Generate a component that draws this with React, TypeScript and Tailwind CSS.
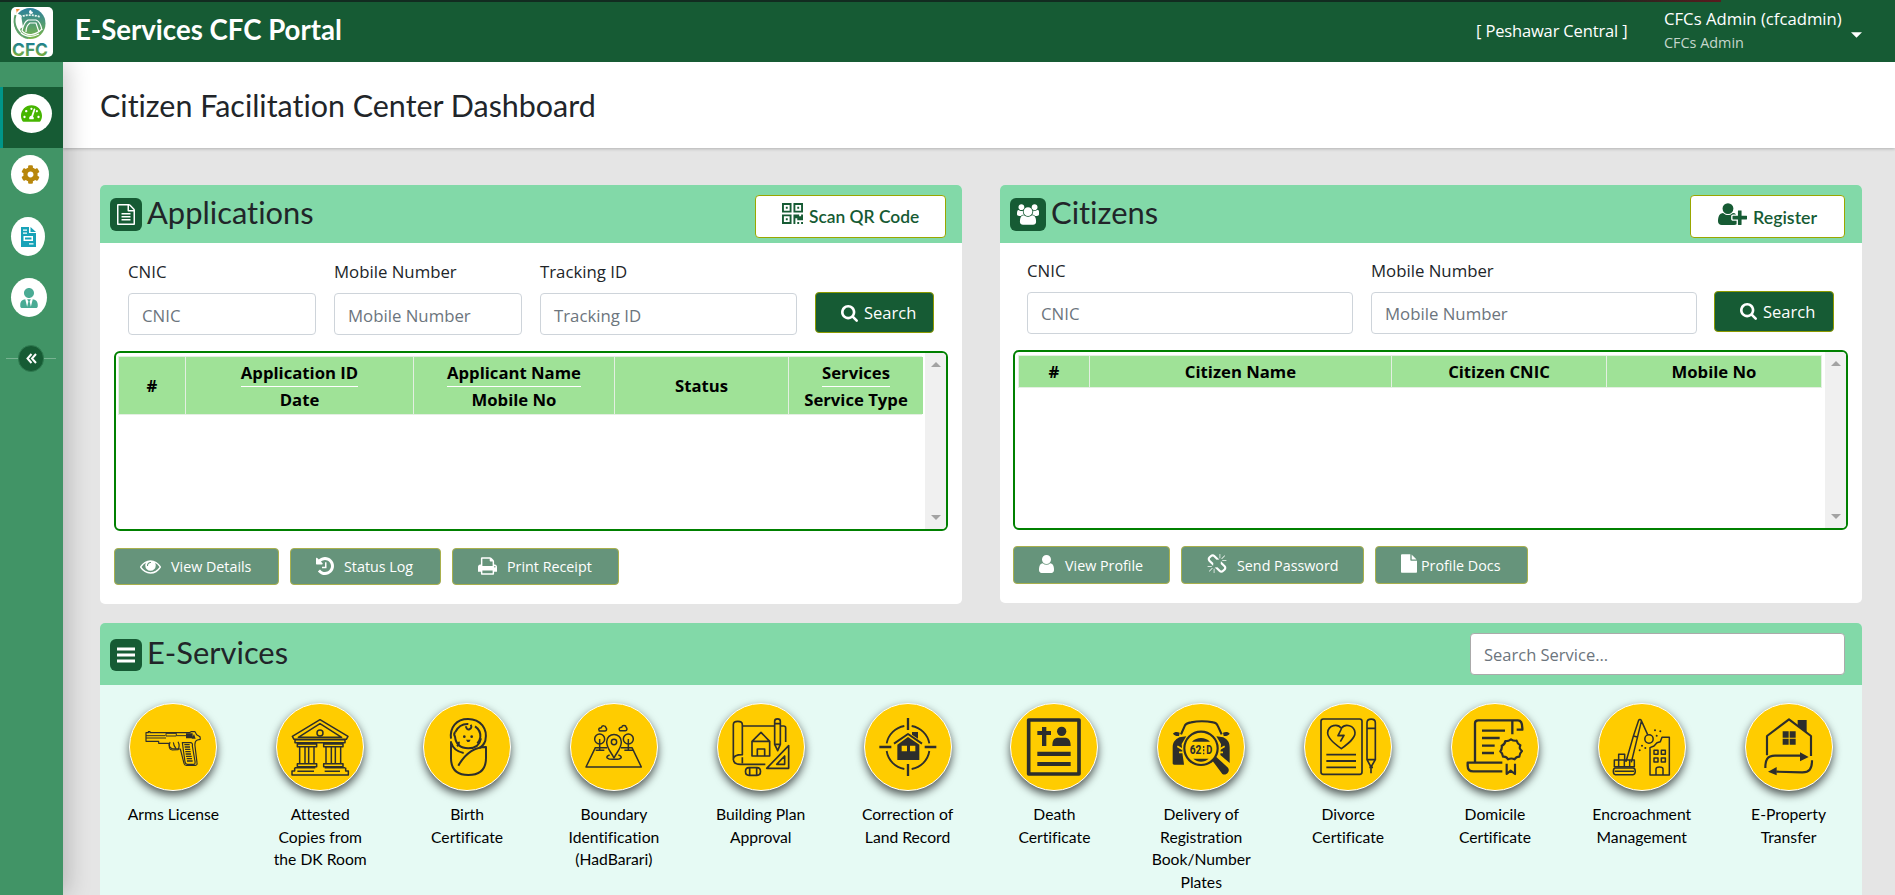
import type { ReactNode } from "react";
import { FaTachometerAlt, FaCog, FaUserTie } from "react-icons/fa";

/* ---------- glyphs ---------- */

const PATHS = {
  search:
    "M1216 832q0-185-131.5-316.5t-316.5-131.5-316.5 131.5-131.5 316.5 131.5 316.5 316.5 131.5 316.5-131.5 131.5-316.5zm512 832q0 52-38 90t-90 38q-54 0-90-38l-343-342q-179 124-399 124-143 0-273.5-55.5t-225-150-150-225-55.5-273.5 55.5-273.5 150-225 225-150 273.5-55.5 273.5 55.5 225 150 150 225 55.5 273.5q0 220-124 399l343 343q37 37 37 90z",
  eye: "M1664 960q-152-236-381-353 61 104 61 225 0 185-131.5 316.5t-316.5 131.5-316.5-131.5-131.5-316.5q0-121 61-225-229 117-381 353 133 205 333.5 326.5t434.5 121.5 434.5-121.5 333.5-326.5zm-720-384q0-20-14-34t-34-14q-125 0-214.5 89.5t-89.5 214.5q0 20 14 34t34 14 34-14 14-34q0-86 61-147t147-61q20 0 34-14t14-34zm848 384q0 34-20 69-140 230-376.5 368.5t-499.5 138.5-499.5-139-376.5-368q-20-35-20-69t20-69q140-229 376.5-368t499.5-139 499.5 139 376.5 368q20 35 20 69z",
  history:
    "M1664 896q0 156-61 298t-164 245-245 164-298 61q-172 0-327-72.5t-264-204.5q-7-10-6.5-22.5t8.5-20.5l137-138q10-9 25-9 16 2 23 12 73 95 179 147t225 52q104 0 198.5-40.5t163.5-109.5 109.5-163.5 40.5-198.5-40.5-198.5-109.5-163.5-163.5-109.5-198.5-40.5q-98 0-188 35.5t-160 101.5l137 138q31 30 14 69-17 40-59 40h-448q-26 0-45-19t-19-45v-448q0-42 40-59 39-17 69 14l130 129q107-101 244.5-156.5t284.5-55.5q156 0 298 61t245 164 164 245 61 298zm-640-288v448q0 14-9 23t-23 9h-320q-14 0-23-9t-9-23v-64q0-14 9-23t23-9h224v-352q0-14 9-23t23-9h64q14 0 23 9t9 23z",
  print:
    "M448 1536h896v-256h-896v256zm0-640h896v-384h-160q-40 0-68-28t-28-68v-160h-640v640zm1152 64q0-26-19-45t-45-19-45 19-19 45 19 45 45 19 45-19 19-45zm128 0v416q0 13-9.5 22.5t-22.5 9.5h-224v160q0 40-28 68t-68 28h-960q-40 0-68-28t-28-68v-160h-224q-13 0-22.5-9.5t-9.5-22.5v-416q0-79 56.5-135.5t135.5-56.5h64v-544q0-40 28-68t68-28h672q40 0 88 20t76 48l152 152q28 28 48 76t20 88v256h64q79 0 135.5 56.5t56.5 135.5z",
  user: "M1536 1399q0 109-62.5 187t-150.5 78h-854q-88 0-150.5-78t-62.5-187q0-85 8.5-160.5t31.5-152 58.5-131 94-89 134.5-34.5q131 128 313 128t313-128q76 0 134.5 34.5t94 89 58.5 131 31.5 152 8.5 160.5zm-256-887q0 159-112.5 271.5t-271.5 112.5-271.5-112.5-112.5-271.5 112.5-271.5 271.5-112.5 271.5 112.5 112.5 271.5z",
  unlink:
    "M503 1271l-256 256q-10 9-23 9-12 0-23-9-9-10-9-23t9-23l256-256q10-9 23-9t23 9q9 10 9 23t-9 23zm169 41v320q0 14-9 23t-23 9-23-9-9-23v-320q0-14 9-23t23-9 23 9 9 23zm-224-224q0 14-9 23t-23 9h-320q-14 0-23-9t-9-23 9-23 23-9h320q14 0 23 9t9 23zm1264 128q0 120-85 203l-147 146q-83 83-203 83-121 0-204-85l-334-335q-21-21-42-56l239-18 273 274q28 28 68 27.5t68-27.5l147-146q28-28 28-67 0-40-28-68l-274-275 18-239q35 21 56 42l336 336q84 86 84 204zm-617-724l-239 18-273-274q-28-28-68-28-39 0-68 27l-147 146q-28 28-28 67 0 40 28 68l274 274-18 240q-35-21-56-42l-336-336q-84-86-84-204 0-120 85-203l147-146q83-83 203-83 121 0 204 85l334 335q21 21 42 56zm633 84q0 14-9 23t-23 9h-320q-14 0-23-9t-9-23 9-23 23-9h320q14 0 23 9t9 23zm-544-544v320q0 14-9 23t-23 9-23-9-9-23v-320q0-14 9-23t23-9 23 9 9 23zm407 151l-256 256q-11 9-23 9t-23-9q-9-10-9-23t9-23l256-256q10-9 23-9t23 9q9 10 9 23t-9 23z",
  file: "M1152 512v-472q22 14 36 28l408 408q14 14 28 36h-472zm-128 32q0 40 28 68t68 28h544v1056q0 40-28 68t-68 28h-1344q-40 0-68-28t-28-68v-1600q0-40 28-68t68-28h800v544z",
  fileText:
    "M1596 380q28 28 48 76t20 88v1152q0 40-28 68t-68 28h-1344q-40 0-68-28t-28-68v-1600q0-40 28-68t68-28h896q40 0 88 20t76 48zm-444-244v376h376q-10-29-22-41l-313-313q-12-12-41-22zm384 1528v-1024h-416q-40 0-68-28t-28-68v-416h-768v1536h1280zm-1024-864q0-14 9-23t23-9h704q14 0 23 9t9 23v64q0 14-9 23t-23 9h-704q-14 0-23-9t-9-23v-64zm736 224q14 0 23 9t9 23v64q0 14-9 23t-23 9h-704q-14 0-23-9t-9-23v-64q0-14 9-23t23-9h704zm0 256q14 0 23 9t9 23v64q0 14-9 23t-23 9h-704q-14 0-23-9t-9-23v-64q0-14 9-23t23-9h704z",
  users:
    "M593 896q-162 5-265 128h-134q-82 0-138-40.5t-56-118.5q0-353 124-353 6 0 43.5 21t97.5 42.5 119 21.5q67 0 133-23-5 37-5 66 0 159 93 293zm1071 637q0 120-73 189.5t-194 69.5h-874q-121 0-194-69.5t-73-189.5q0-53 3.5-103.5t14-109 26.5-108.5 43-97.5 62-81 85.5-53.5 111.5-20q10 0 43 21.5t73 48 107 48 135 21.5 135-21.5 107-48 73-48 43-21.5q61 0 111.5 20t85.5 53.5 62 81 43 97.5 26.5 108.5 14 109 3.5 103.5zm-1024-1277q0 106-75 181t-181 75-181-75-75-181 75-181 181-75 181 75 75 181zm704 384q0 159-112.5 271.5t-271.5 112.5-271.5-112.5-112.5-271.5 112.5-271.5 271.5-112.5 271.5 112.5 112.5 271.5zm576 225q0 78-56 118.5t-138 40.5h-134q-103-123-265-128 93-134 93-293 0-29-5-66 66 23 133 23 59 0 119-21.5t97.5-42.5 43.5-21q124 0 124 353zm-128-609q0 106-75 181t-181 75-181-75-75-181 75-181 181-75 181 75 75 181z",
  userPlus:
    "M704 896q-159 0-271.5-112.5t-112.5-271.5 112.5-271.5 271.5-112.5 271.5 112.5 112.5 271.5-112.5 271.5-271.5 112.5zm960 128h352q13 0 22.5 9.5t9.5 22.5v192q0 13-9.5 22.5t-22.5 9.5h-352v352q0 13-9.5 22.5t-22.5 9.5h-192q-13 0-22.5-9.5t-9.5-22.5v-352h-352q-13 0-22.5-9.5t-9.5-22.5v-192q0-13 9.5-22.5t22.5-9.5h352v-352q0-13 9.5-22.5t22.5-9.5h192q13 0 22.5 9.5t9.5 22.5v352zm-736 224q0 52 38 90t90 38h256v238q-68 50-171 50h-874q-121 0-194-69t-73-190q0-53 3.5-103.5t14-109 26.5-108.5 43-97.5 62-81 85.5-53.5 111.5-20q19 0 39 17 79 61 154.500 91.500t164.500 30.500 164.500-30.500 154.500-91.500q20-17 39-17 132 0 217 96h-223q-52 0-90 38t-38 90v192z",
};

function Glyph({ name, box = "0 0 1792 1792", className }: { name: keyof typeof PATHS; box?: string; className?: string }) {
  return (
    <svg viewBox={box} className={"shrink-0 " + (className ?? "")} fill="currentColor">
      <path d={PATHS[name]} />
    </svg>
  );
}

function QrGlyph() {
  return (
    <svg viewBox="0 0 22 22" className="h-[21px] w-[21px] shrink-0" fill="currentColor">
      <path fillRule="evenodd" d="M0 0h10v10H0zM2 2v6h6V2zM12 0h10v10H12zM14 2v6h6V2zM0 12h10v10H0zM2 14v6h6v-6z" />
      <path d="M4 4h2v2H4zM16 4h2v2h-2zM4 16h2v2H4zM12 12h6v2h2v-2h2v6h-6v-2h-2v6h-2zM16 20h2v2h-2zM20 20h2v2h-2z" />
    </svg>
  );
}

function Logo() {
  return (
    <svg viewBox="0 0 42 50" className="h-[50px] w-[42px] shrink-0 overflow-visible">
      <defs>
        <linearGradient id="brand" x1="0" y1="0" x2="0" y2="1">
          <stop offset="0" stopColor="#2a7f9e" />
          <stop offset="1" stopColor="#7ab648" />
        </linearGradient>
        <linearGradient id="brandText" x1="0" y1="0" x2="0" y2="1">
          <stop offset="0.2" stopColor="#1b7f8f" />
          <stop offset="0.9" stopColor="#86b531" />
        </linearGradient>
      </defs>
      <rect width="42" height="50" rx="5" fill="#fff" />
      <circle cx="19" cy="16.500" r="15.500" fill="url(#brand)" />
      <path d="M4.500 6C1 16 5 29 17 32c-4-3-7-6-8-10l3-2L10 8z" fill="#fff" />
      <path d="M4.500 8C1.500 17 6 28 17 31" fill="none" stroke="#5da06b" strokeWidth="2" />
      <path d="M9 10c5-2.500 14-2.500 20 0" fill="none" stroke="#e8f4ef" strokeWidth="1.800" strokeDasharray="2 1" />
      <path d="M11 24c1-5 2-9 6-11h8c3 1 5 5 6 10M15 25c0-4 1-7 4-9h6l3 9" fill="none" stroke="#fff" strokeWidth="1.200" />
      <path d="M11 24c5 5 13 5 20-2M10 26c5 4 12 4 18 1" fill="none" stroke="#fff" strokeWidth="1.200" />
      <path d="M20 3a2 2 0 1 0 2 2 2 2 0 0 1-2-2" fill="#fff" />
      <path d="M5 2h4l-3 3v2z" fill="#f28c38" />
      <text x="1" y="49" fontFamily="Inter, Liberation Sans, sans-serif" fontWeight="700" fontSize="18" textLength="36" lengthAdjust="spacingAndGlyphs" fill="url(#brandText)">
        CFC
      </text>
    </svg>
  );
}

function InvoiceGlyph() {
  return (
    <svg viewBox="0 0 15 20" className="h-5 w-[15px]" fill="#17a2b8">
      <path fillRule="evenodd" d="M0 0h8v6h7v14H0zM2 2.500v1.300h4V2.500zM2 5.500v1.300h4V5.500zM2.500 9v5h9.500V9zM4 10.500h6.500v2H4zM8 16.300v1.300h4.500v-1.300z" />
      <path d="M9.500 0L15 5H9.500z" />
    </svg>
  );
}

/* ---------- service pictograms ---------- */

type Service = { label: string; box: string; art: ReactNode };

const solid = { fill: "#2d2e2c", stroke: "none" };

const services: Service[] = [
  {
    label: "Arms License",
    box: "118 279 264 264",
    art: (
      <g strokeWidth="3.500">
        <path d="M169 368h7v-3h5v3h118l5-3h12l5 9 10 6 1 8-9 2c-8 3-8 10-7 18l6 50c1 6-1 8-5 8h-27c-4 0-6-2-7-6l-11-43-24-1c-7-1-10-9-10-16h-31v-6h-38z" />
        <path d="M169 377h58M169 384h60M229 370h31v8h-31zM262 377h34" strokeWidth="3" />
        <path d="M289 370h20v15h-20zM313 372l5 14h-12" {...solid} />
        <path d="M241 396c-5 16-2 23 7 24l17-1c5-9 4-17 0-24M251 397c1 9 4 14 8 19" />
        <path d="M278 398h26c4 1 5 6 4 10l8 46c1 7-1 9-5 9h-18c-4 0-6-3-7-7z" />
        <path d="M284 404h16M285 411h16M286 418h16M287 425h16M288 432h16M289 439h17M291 446h16M292 453h17" strokeWidth="4" />
      </g>
    ),
  },
  {
    label: "Attested Copies from the DK Room",
    box: "558 279 264 264",
    art: (
      <g strokeWidth="4.500">
        <path d="M690 329l84 50-5 9H612l-5-9zM690 341l-65 41h130z" />
        <circle cx="690" cy="369" r="9" />
        <path d="M615 389h150v9H615zM622 402h58v8h-58zM701 402h58v8h-58z" />
        <path d="M629 411v49M645 411v49M656 411v49M672 411v49M708 411v49M724 411v49M736 411v49M752 411v49" />
        <path d="M622 461h58v9h-58zM701 461h58v9h-58zM614 473h62M704 473h62M614 473v10h-8v12h169v-12h-8v-10M622 484h50M704 484h46" />
      </g>
    ),
  },
  {
    label: "Birth Certificate",
    box: "999 279 264 264",
    art: (
      <g strokeWidth="6">
        <path d="M1083 386c-4-34 16-59 51-59 38 0 60 30 52 65-4 12-10 18-18 22M1096 366c9-18 22-25 39-24M1155 349c12 8 17 20 16 32-1 9-5 14-9 19" />
        <path d="M1142 344c9 14-14 21-14 5M1096 366c-5 4-4 9-1 14 3 28 22 35 40 35 20 0 34-9 38-30" />
        <path d="M1083 394v50c0 34 16 51 52 51 36 0 53-17 53-51v-33c-42 0-66 26-83 56M1083 397c6 20 20 29 38 32M1101 409c6-5 6-10 5-14" />
        <g {...solid}>
          <circle cx="1123" cy="380" r="4" />
          <circle cx="1145" cy="380" r="4" />
          <path d="M1128 389h14l-4 7h-6z" />
        </g>
      </g>
    ),
  },
  {
    label: "Boundary Identification (HadBarari)",
    box: "89 39 264 264",
    art: (
      <g strokeWidth="4.500">
        <path d="M200 173h-35l-28 58h166l-28-58h-33" />
        <path d="M221 204c-8-17-22-29-22-48 0-30 44-30 44 0 0 19-14 31-22 48z" />
        <circle cx="221" cy="156" r="8" />
        <path d="M208 195c-16 5-8 14 13 13 22 1 29-8 13-13" />
        <circle cx="178" cy="147" r="15" />
        <circle cx="264" cy="147" r="15" />
        <path d="M178 147v34M264 147v34M166 181h26M252 181h26" />
        <path d="M177 123c-5-8 2-10 6-10 2-8 13-6 13-1 5 5 3 11-2 11zM238 122c-5-8 2-10 6-10 2-8 13-6 13-1 5 5 3 11-2 11z" />
      </g>
    ),
  },
  {
    label: "Building Plan Approval",
    box: "530 39 264 264",
    art: (
      <g strokeWidth="5">
        <path d="M579 210V104c0-13 27-13 27 0v90c-16 0-27 3-27 14 0 12 12 15 22 15h74M607 108h94M606 202v18M722 108h8c4 0 6 3 6 6v42" />
        <path d="M635 198v-44l27-27 26 27v44zM635 154h53M651 198v-21h22v21" />
        <path d="M703 163V94c0-10 17-10 17 0v69l-8 19zM703 101h17M703 163h17" />
        <path d="M745 167v68h-66zM733 198v25h-24z" />
        <path d="M626 233h24c14 0 14 23 0 23h-24c-14 0-14-23 0-23zM628 233v23M649 233v23" />
      </g>
    ),
  },
  {
    label: "Correction of Land Record",
    box: "971 39 264 264",
    art: (
      <g strokeWidth="7">
        <path d="M1103 84v36M1103 222v36M1017 171h36M1153 171h35" />
        <path d="M1039 160a65 65 0 0 1 53-52M1114 108a65 65 0 0 1 53 52M1167 183a65 65 0 0 1-53 54M1092 237a65 65 0 0 1-53-54" strokeWidth="5.500" />
        <path d="M1061 161l42-29 42 29" strokeWidth="6" />
        <path fillRule="evenodd" d="M1071 164l32-23 34 23v46h-66zM1084 167v17h16v-17zM1109 167v17h16v-17zM1115 126h18v20l-18-12z" {...solid} />
      </g>
    ),
  },
  {
    label: "Death Certificate",
    box: "91 39 264 264",
    art: (
      <g>
        <path d="M147 90h151v162H147z" strokeWidth="11" />
        <g {...solid}>
          <path d="M187 111h13v12h14v12h-14v33h-13v-33h-14v-12h14z" />
          <circle cx="246" cy="124" r="14" />
          <path d="M218 168c0-19 6-25 18-25h19c12 0 18 7 18 25zM173 185h100v13H173zM173 216h100v12H173z" />
        </g>
      </g>
    ),
  },
  {
    label: "Delivery of Registration Book/Number Plates",
    box: "531 39 264 264",
    art: (
      <g>
        <g {...solid}>
          <path d="M579 131c3-5 12-6 20-3l-2 10c-7 1-14-1-18-7zM749 131c-3-5-12-6-20-3l2 10c7 1 14-1 18-7z" />
          <path d="M598 142l21-3-14 23 3 34 3 19 1 9h-29c-4 0-5-2-5-5v-46c0-16 7-24 20-31zM730 142l-21-3 14 23-2 33 28 24v-46c0-16-6-24-19-31z" />
          <path d="M636 155c14-15 40-15 54 0zM640 206h46c-12 12-34 12-46 0zM695 209l13-9 36 33c8 11-6 26-17 19z" />
        </g>
        <path d="M603 133l12-27c4-7 11-8 18-9 24-5 46-4 67 0 8 1 11 5 13 10l12 26" strokeWidth="6.500" />
        <path d="M592 169l15 9M597 187h12M734 169l-15 9M729 187h-12" stroke="#ffcc00" strokeWidth="5" />
        <circle cx="663" cy="175" r="50" strokeWidth="6.500" />
        <g fontFamily="Roboto, Liberation Sans, sans-serif" fontWeight="800" fontSize="38" {...solid}>
          <text x="629" y="193" textLength="35" lengthAdjust="spacingAndGlyphs">
            62
          </text>
          <text x="679" y="193" textLength="18" lengthAdjust="spacingAndGlyphs">
            D
          </text>
          <path d="M669 168h4v6h-4zM669 178h4v6h-4zM669 188h4v5h-4z" />
        </g>
      </g>
    ),
  },
  {
    label: "Divorce Certificate",
    box: "971 39 264 264",
    art: (
      <g strokeWidth="5">
        <rect x="1022" y="87" width="123" height="166" rx="7" />
        <path d="M1083 176c-20-14-42-31-41-48 2-24 31-28 41-13 11-15 39-10 41 13 1 17-22 34-41 48z" />
        <path d="M1083 117l-10 20 18-1-11 19" />
        <path d="M1038 194h89M1038 213h89M1038 232h89" strokeWidth="5.500" />
        <path d="M1160 209V98c0-14 25-14 25 0v111l-13 22zM1160 115h25M1160 209h25M1172 228v22M1167 232h11" />
      </g>
    ),
  },
  {
    label: "Domicile Certificate",
    box: "92 279 264 264",
    art: (
      <g strokeWidth="7">
        <path d="M164 457V340c0-6 4-9 10-9h119c9 0 13 9 13 24v4h-17M276 373v-42" />
        <path d="M185 362h69M185 384h53M185 407h38M185 429h36M246 458H142v9c0 12 6 17 17 17h87" />
        <path d="M272 388c7 5 9 5 17 4 2 8 3 10 11 14-3 8-3 10 5 17-6 6-8 8-8 17-8 0-10 1-14 8-8-4-12-4-20 0-4-7-7-9-15-8 0-8-1-10-8-16 5-7 6-9 4-17 8-3 10-6 11-14 8 1 10 0 17-5zM259 461v31l12-10 13 10v-31" strokeWidth="6.500" />
      </g>
    ),
  },
  {
    label: "Encroachment Management",
    box: "532 279 264 264",
    art: (
      <g strokeWidth="4.500">
        <path d="M616 455l22-76 16-48c2-4 7-3 8 1l19 42M662 334l-30 123M638 378l12 3M594 455v-22h18v22M581 450h60v20h-60zM594 450v20M611 450v20M627 450v20" />
        <circle cx="685" cy="387" r="12.500" />
        <path d="M584 474h53c9 0 9 20 0 20h-53c-8 0-8-20 0-20zM582 484h58" />
        <path d="M688 495v-82l12-5 9-10 10-3 5-13h22v113zM706 495v-18c0-8 21-8 21 0v18M700 421h12v12h-12zM722 421h12v12h-12zM700 444h12v12h-12zM722 444h12v12h-12z" />
        <g {...solid}>
          <circle cx="703" cy="361" r="3" />
          <circle cx="719" cy="364" r="3" />
          <circle cx="708" cy="377" r="3" />
          <circle cx="664" cy="407" r="3" />
          <circle cx="674" cy="414" r="3" />
          <circle cx="657" cy="421" r="3" />
        </g>
      </g>
    ),
  },
  {
    label: "E-Property Transfer",
    box: "973 279 264 264",
    art: (
      <g strokeWidth="6.500">
        <path d="M1039 436v-58l66-50 66 50v60" />
        <path d="M1034 474c0-24 5-37 29-37h80M1174 451c0 26-8 37-31 36l-76-2" />
        <path d="M1131 330h27v38l-27-20zM1086 364h18v19h-18zM1107 364h18v19h-18zM1086 386h18v18h-18zM1107 386h18v18h-18zM1138 427l26 14-26 13zM1068 471l-26 14 26 11z" {...solid} />
      </g>
    ),
  },
];

/* ---------- pieces ---------- */

function Field({ label, className, textClass = "" }: { label: string; className: string; textClass?: string }) {
  return (
    <div className={className}>
      <div className="h-6 pt-px text-[16.800px] leading-6 text-[#212529]">{label}</div>
      <div className={"mt-[10px] flex h-[42px] items-center rounded border border-[#ced4da] bg-white px-[13px] text-[16.800px] text-[#6c757d] " + textClass}>
        {label}
      </div>
    </div>
  );
}

function SearchButton({ className }: { className: string }) {
  return (
    <button className={"flex h-[41px] items-center rounded border border-[#8c9a00] bg-[#165b34] pl-[25px] text-[16.500px] text-white " + className}>
      <Glyph name="search" box="64 128 1664 1664" className="mr-[6px] h-[17px] w-[17px]" />
      <span className="pt-px">Search</span>
    </button>
  );
}

function ActionButton({ icon, children, className }: { icon: ReactNode; children: ReactNode; className: string }) {
  return (
    <button className={"flex items-center rounded border border-[#a9b04d] bg-[#66947b] pl-[25px] text-[14.300px] text-white " + className}>
      {icon}
      {children}
    </button>
  );
}

function PanelHeader({ icon, title, badge, className, titleClass = "", children }: { icon: ReactNode; title: string; badge: string; className: string; titleClass?: string; children: ReactNode }) {
  return (
    <div className={"flex items-start bg-[#82d9a8] pl-[10px] pt-[10px] " + className}>
      <span className={"flex shrink-0 items-center justify-center rounded-md bg-[#165b34] text-white " + badge}>{icon}</span>
      <span className={"ml-[5px] font-[Lato] text-[30.900px] leading-9 text-[#212529] " + titleClass}>{title}</span>
      <div className="ml-auto">{children}</div>
    </div>
  );
}

function ScrollBar() {
  return (
    <div className="flex w-[21px] shrink-0 flex-col items-center justify-between rounded-r-sm bg-[#f0f0f0] pb-[9px] pt-[9px]">
      <svg viewBox="0 0 10 5" className="h-[5px] w-[10px]" fill="#a3a3a3">
        <path d="M5 0l5 5H0z" />
      </svg>
      <svg viewBox="0 0 10 5" className="h-[5px] w-[10px]" fill="#a3a3a3">
        <path d="M5 5l5-5H0z" />
      </svg>
    </div>
  );
}

function Column({ top, bottom }: { top: string; bottom?: string }) {
  return (
    <div className="flex flex-col items-center justify-center bg-[#9fe297] text-[16.700px] font-bold text-black">
      <span className={bottom ? "border-b border-white pt-px leading-[26px]" : "leading-[26px]"}>{top}</span>
      {bottom && <span className="leading-[26px]">{bottom}</span>}
    </div>
  );
}

const navCircle = "flex h-[39px] items-center justify-center rounded-[50%] bg-white";

export default function App() {
  return (
    <div className="flex h-[895px] w-[1895px] flex-col overflow-hidden bg-[#e5e5e5] font-['Open_Sans',sans-serif] [font-variant-ligatures:none]">
      <header className="relative z-30 flex h-[62px] shrink-0 items-start bg-[#165b34] text-white">
        <div className="absolute left-0 top-0 h-[2px] w-[1721px] bg-[linear-gradient(90deg,#122b20_0%,#122b20_92%,#5a1a1e_100%)]" />
        <div className="ml-[11px] mt-[7px]">
          <Logo />
        </div>
        <h1 className="ml-[22px] mt-[12px] font-[Lato] text-[27.600px] font-bold leading-9">E-Services CFC Portal</h1>
        <div className="ml-auto mt-[19px] w-[188px] text-[16.500px] leading-6 tracking-[-0.15px]">[ Peshawar Central ]</div>
        <div className="mt-[7px] w-[187px]">
          <div className="text-[16.700px] leading-6">CFCs Admin (cfcadmin)</div>
          <div className="text-[14.400px] leading-6 text-[#c5d6cc]">CFCs Admin</div>
        </div>
        <svg viewBox="0 0 12 6" className="mr-[33px] mt-[32px] h-[6px] w-[11px]" fill="#fff">
          <path d="M0 0h12L6 6z" />
        </svg>
      </header>

      <div className="flex min-h-0 flex-1">
        <aside className="z-20 flex w-[63px] shrink-0 flex-col bg-[#419466] pt-[25px] shadow-[4px_0_25px_rgba(0,0,0,0.22)]">
          <div className="flex h-[61px] border-l-[3px] border-[#009688] bg-[#165b34] pl-2 pt-[7px]">
            <div className={navCircle + " w-[41px]"}>
              <FaTachometerAlt className="h-[19px] w-[21px]" color="#46b500" />
            </div>
          </div>
          <div className="h-[61px] pl-[11px] pt-[7px]">
            <div className={navCircle + " w-[38px]"}>
              <FaCog className="h-[19px] w-[19px]" color="#b8860b" />
            </div>
          </div>
          <div className="h-[61px] pl-[11px] pt-[8px]">
            <div className={navCircle + " w-[34px]"}>
              <InvoiceGlyph />
            </div>
          </div>
          <div className="h-[61px] pl-[11px] pt-[8px]">
            <div className={navCircle + " w-[36px]"}>
              <FaUserTie className="h-[20px] w-[18px]" color="#4aab94" />
            </div>
          </div>
          <div className="flex items-center pl-[6px] pt-[14px]">
            <span className="h-px w-3 bg-[#77b391]" />
            <span className="flex h-[27px] w-[26px] items-center justify-center rounded-full border border-[#2f7a50] bg-[#165b34]">
              <svg viewBox="0 0 11 11" className="h-[11px] w-[11px]" fill="none" stroke="#fff" strokeWidth="2">
                <path d="M5.500 1L1.500 5.500l4 4.500M10 1L6 5.500l4 4.500" />
              </svg>
            </span>
            <span className="h-px w-3 bg-[#77b391]" />
          </div>
        </aside>

        <main className="flex min-w-0 flex-1 flex-col">
          <div className="flex h-[86px] shrink-0 items-center bg-white pl-[37px] shadow-[0_1px_3px_rgba(0,0,0,0.22)]">
            <h2 className="font-[Lato] text-[30.450px] leading-9 text-[#212529]">Citizen Facilitation Center Dashboard</h2>
          </div>

          <div className="flex flex-col pl-[37px] pr-[33px] pt-[37px]">
            <div className="flex items-start gap-[38px]">
              {/* Applications */}
              <section className="h-[419px] w-[862px] overflow-hidden rounded-[5px] bg-white">
                <PanelHeader
                  className="h-[58px] pr-4"
                  badge="mt-[3px] h-[33px] w-8"
                  icon={<Glyph name="fileText" box="128 0 1536 1792" className="h-[21px] w-[18px]" />}
                  title="Applications"
                >
                  <button className="flex h-[43px] w-[191px] items-center rounded border border-[#9aa600] bg-white pl-[26px] font-[Lato] text-[17.400px] font-semibold text-[#165b34]">
                    <span className="-mt-[6px] mr-[6px]">
                      <QrGlyph />
                    </span>
                    <span className="pt-[2px]">Scan QR Code</span>
                  </button>
                </PanelHeader>
                <div className="flex pl-7 pt-4">
                  <Field label="CNIC" textClass="pt-[3px]" className="w-[188px]" />
                  <Field label="Mobile Number" textClass="pt-[3px]" className="ml-[18px] w-[188px]" />
                  <Field label="Tracking ID" textClass="pt-[3px]" className="ml-[18px] w-[257px]" />
                  <SearchButton className="ml-[18px] mt-[33px] w-[119px] pt-px" />
                </div>
                <div className="ml-[14px] mt-4 flex h-[180px] w-[834px] overflow-hidden rounded-md border-2 border-[#008000]">
                  <div className="flex flex-1 items-start pl-[2px] pt-[3px]">
                    <div className="grid h-[59px] w-[804px] grid-cols-[66px_227px_200px_173px_134px] gap-px border border-[#e4efe2] bg-[#e4efe2]">
                      <Column top="#" />
                      <Column top="Application ID" bottom="Date" />
                      <Column top="Applicant Name" bottom="Mobile No" />
                      <Column top="Status" />
                      <Column top="Services" bottom="Service Type" />
                    </div>
                  </div>
                  <ScrollBar />
                </div>
                <div className="ml-[14px] mt-[17px] flex gap-[11px]">
                  <ActionButton className="h-[37px] w-[165px]" icon={<Glyph name="eye" box="0 384 1792 1152" className="mr-[10px] h-[14px] w-[21px]" />}>
                    View Details
                  </ActionButton>
                  <ActionButton className="h-[37px] w-[151px]" icon={<Glyph name="history" box="128 128 1536 1536" className="mb-[2px] mr-[10px] h-[18px] w-[18px]" />}>
                    Status Log
                  </ActionButton>
                  <ActionButton className="h-[37px] w-[167px]" icon={<Glyph name="print" box="64 128 1664 1536" className="mb-[2px] mr-[10px] h-[18px] w-[19px]" />}>
                    Print Receipt
                  </ActionButton>
                </div>
              </section>

              {/* Citizens */}
              <section className="h-[418px] w-[862px] overflow-hidden rounded-[5px] bg-white">
                <PanelHeader
                  className="h-[58px] pr-[17px]"
                  badge="mt-[3px] h-[33px] w-9"
                  icon={<Glyph name="users" box="0 0 1920 1792" className="h-[21px] w-[22px]" />}
                  title="Citizens"
                >
                  <button className="flex h-[43px] w-[155px] items-center rounded border border-[#9aa600] bg-white pl-[27px] font-[Lato] text-[17.800px] font-semibold text-[#165b34]">
                    <Glyph name="userPlus" box="0 128 2048 1536" className="-mt-[5px] mr-[6px] h-[22px] w-[29px]" />
                    <span className="pt-px">Register</span>
                  </button>
                </PanelHeader>
                <div className="flex pl-[27px] pt-[15px]">
                  <Field label="CNIC" textClass="pt-[2px]" className="w-[326px]" />
                  <Field label="Mobile Number" textClass="pt-[2px]" className="ml-[18px] w-[326px]" />
                  <SearchButton className="ml-[17px] mt-[33px] w-[120px]" />
                </div>
                <div className="ml-[13px] mt-4 flex h-[180px] w-[835px] overflow-hidden rounded-md border-2 border-[#008000]">
                  <div className="flex flex-1 items-start pl-[3px] pt-[3px]">
                    <div className="grid h-[33px] w-[804px] grid-cols-[70px_301px_214px_214px] gap-px border border-[#e4efe2] bg-[#e4efe2]">
                      <Column top="#" />
                      <Column top="Citizen Name" />
                      <Column top="Citizen CNIC" />
                      <Column top="Mobile No" />
                    </div>
                  </div>
                  <ScrollBar />
                </div>
                <div className="ml-[13px] mt-4 flex gap-[11px]">
                  <ActionButton className="h-[38px] w-[157px] pt-px" icon={<Glyph name="user" box="256 128 1280 1536" className="mb-[3px] mr-[11px] h-[18px] w-[15px]" />}>
                    View Profile
                  </ActionButton>
                  <ActionButton className="h-[38px] w-[183px] pt-px" icon={<Glyph name="unlink" box="64 0 1664 1664" className="mb-[5px] mr-[10px] h-[19px] w-[20px]" />}>
                    Send Password
                  </ActionButton>
                  <ActionButton className="h-[38px] w-[153px] pt-px" icon={<Glyph name="file" box="128 0 1536 1792" className="mb-[5px] mr-[4px] h-[21px] w-4" />}>
                    Profile Docs
                  </ActionButton>
                </div>
              </section>
            </div>

            {/* E-Services */}
            <section className="mt-[19px] h-[320px] overflow-hidden rounded-t-[5px] bg-[#e6faf4]">
              <PanelHeader
                className="h-[62px] pr-[17px]"
                badge="mt-[6px] h-8 w-8"
                titleClass="mt-[2px]"
                icon={
                  <svg viewBox="0 0 18 16" className="h-4 w-[18px]" fill="#fff">
                    <path d="M0 0.500h18v3H0zM0 6.500h18v3H0zM0 12.500h18v3H0z" />
                  </svg>
                }
                title="E-Services"
              >
                <div className="flex h-[42px] w-[375px] items-center rounded border border-[#aaaaaa] bg-white px-[13px] pt-[2px] text-[16.500px] text-[#6c757d]">
                  Search Service...
                </div>
              </PanelHeader>
              <div className="grid grid-cols-12 pt-[18px]">
                {services.map((s) => (
                  <div key={s.label} className="flex flex-col items-center">
                    <div className="h-[88px] w-[88px] rounded-full border border-white bg-[#ffcc00] shadow-[0_4px_8px_rgba(0,0,0,0.65)]">
                      <svg
                        viewBox={s.box}
                        className="-ml-px -mt-px h-[88px] w-[88px]"
                        fill="none"
                        stroke="#2d2e2c"
                        strokeLinejoin="round"
                      >
                        {s.art}
                      </svg>
                    </div>
                    <div className="mt-[12px] w-[104px] text-center font-[Lato] text-[15.700px] leading-[22.600px] text-black">{s.label}</div>
                  </div>
                ))}
              </div>
            </section>
          </div>
        </main>
      </div>
    </div>
  );
}
